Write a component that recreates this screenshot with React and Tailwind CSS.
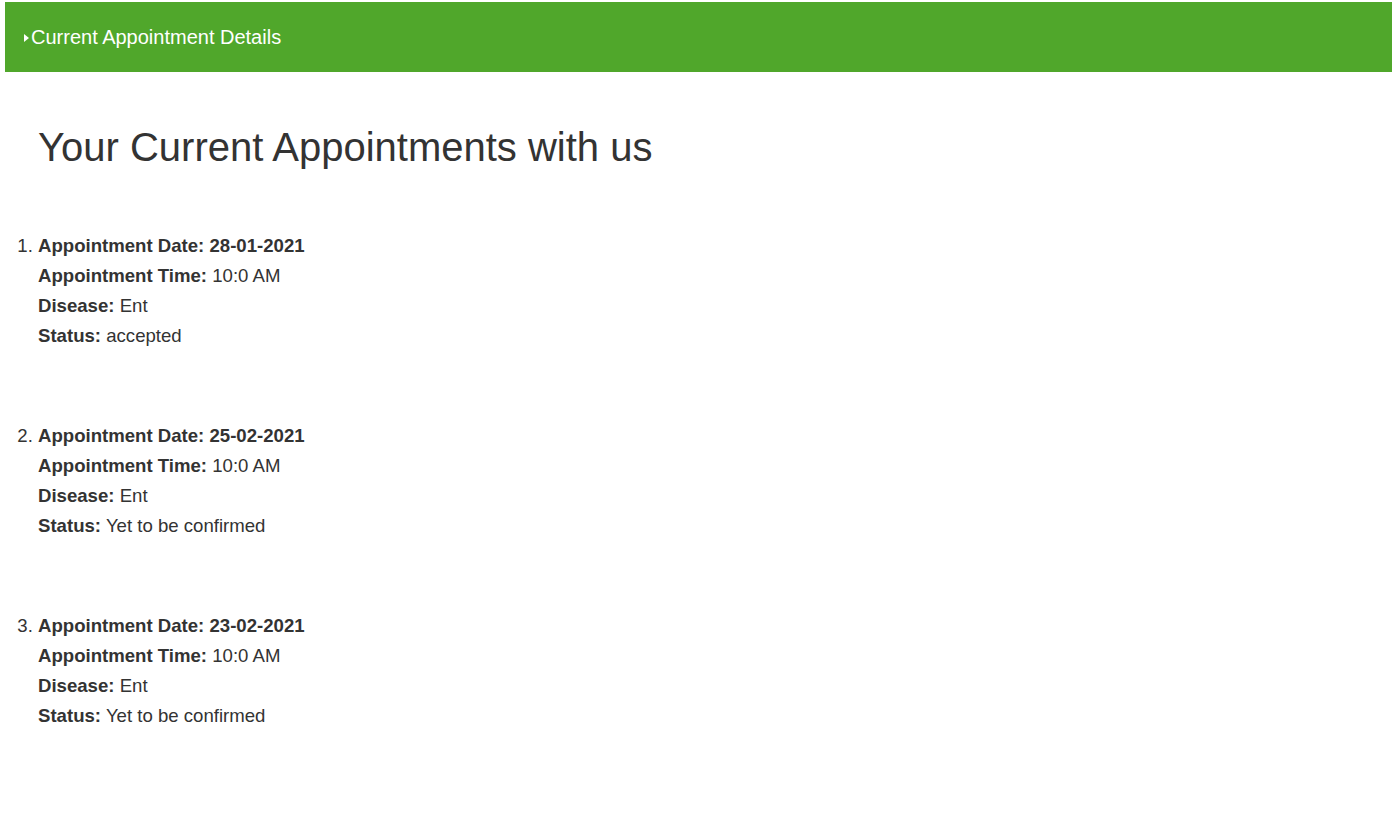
const appointments = [
  { date: '28-01-2021', time: '10:0 AM', disease: 'Ent', status: 'accepted' },
  { date: '25-02-2021', time: '10:0 AM', disease: 'Ent', status: 'Yet to be confirmed' },
  { date: '23-02-2021', time: '10:0 AM', disease: 'Ent', status: 'Yet to be confirmed' },
];

export default function App() {
  return (
    <div className="min-h-screen bg-white pt-[2px] pl-[5px] pr-[8px] text-[#333] font-['Liberation_Sans',Arial,sans-serif]">
      <div className="h-[70px] bg-[#50a72b] flex items-center pl-[19px] text-white text-[20px]">
        <span className="w-0 h-0 border-y-[4px] border-l-[5px] border-y-transparent border-l-white mr-[2px] mt-[1px]" />
        <span>Current Appointment Details</span>
      </div>

      <h1 className="mt-[53px] ml-[33px] text-[40px] leading-[44px] font-normal">
        Your Current Appointments with us
      </h1>

      <ol className="mt-[62px] pl-[33px] list-decimal text-[18.6px] leading-[30px]">
        {appointments.map((a, i) => (
          <li key={i} className="mb-[70px]">
            <div className="font-bold">Appointment Date: {a.date}</div>
            <div><b>Appointment Time:</b> {a.time}</div>
            <div><b>Disease:</b> {a.disease}</div>
            <div><b>Status:</b> {a.status}</div>
          </li>
        ))}
      </ol>
    </div>
  );
}
